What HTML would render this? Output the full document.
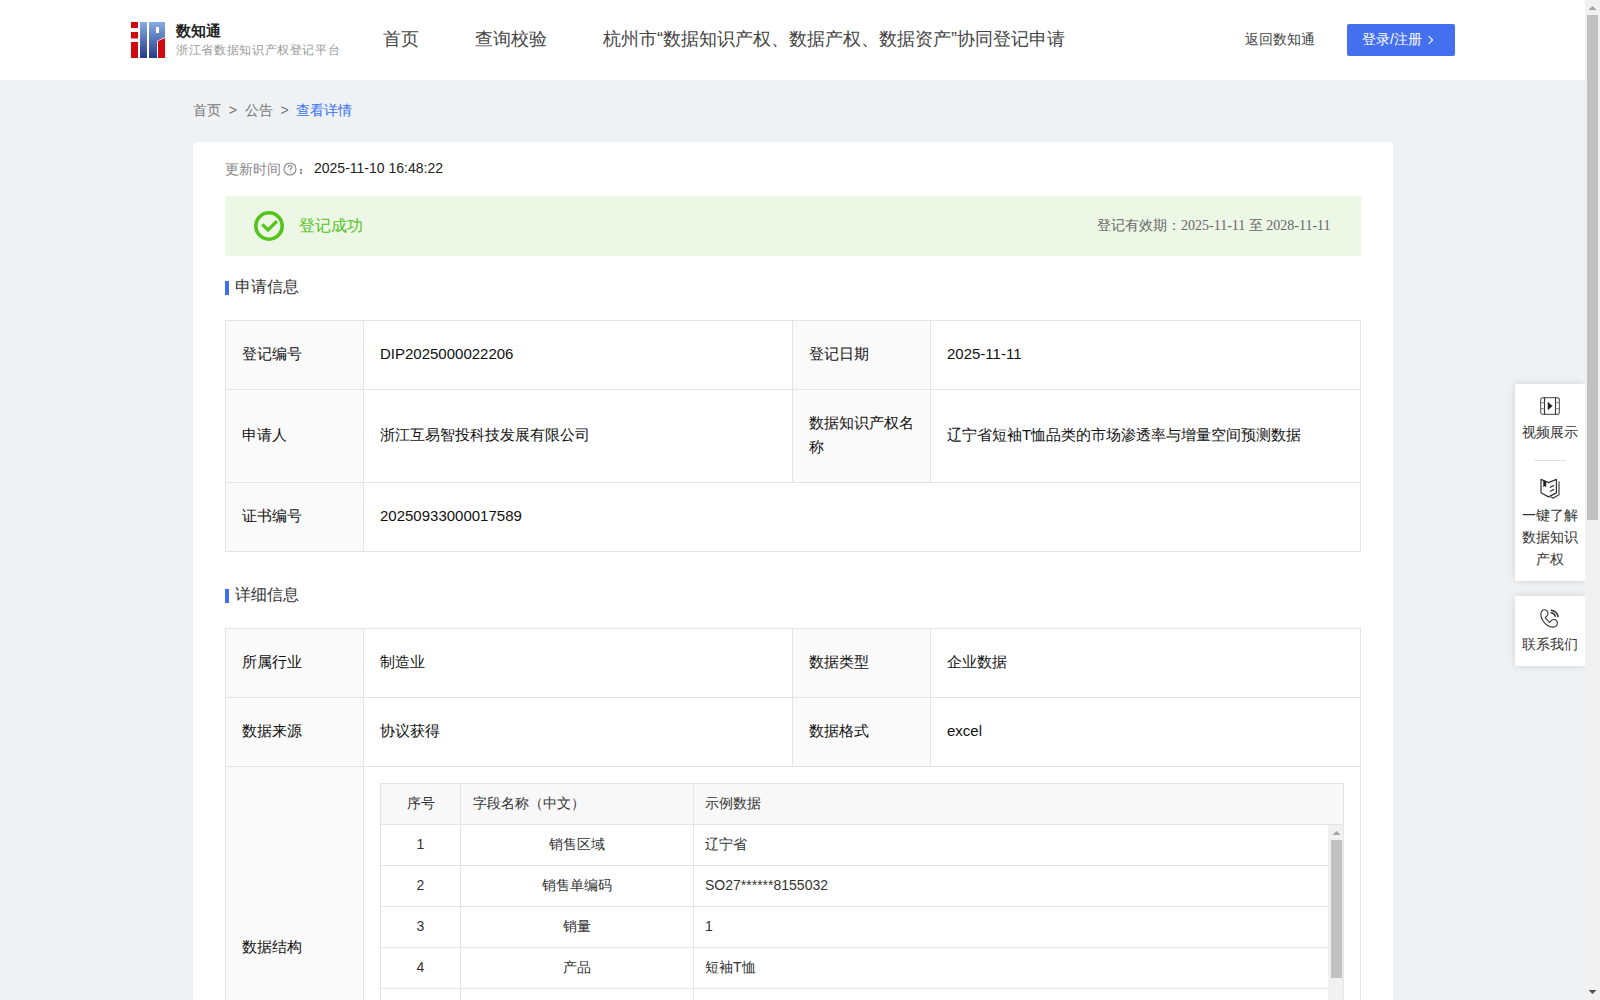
<!DOCTYPE html>
<html><head><meta charset="utf-8">
<style>
*{box-sizing:border-box;margin:0;padding:0}
html,body{width:1600px;height:1000px;overflow:hidden}
body{font-family:"Liberation Sans",sans-serif;background:#eef2f5;color:#333;position:relative;font-size:14px}
.abs{position:absolute;white-space:nowrap}
#hdr{position:absolute;left:0;top:0;width:1585px;height:80px;background:#fff}
.nav{position:absolute;top:27px;font-size:18px;color:#444;line-height:24px}
#sb{position:absolute;left:1585px;top:0;width:15px;height:1000px;background:#f1f1f1}
#sbthumb{position:absolute;left:2px;top:15px;width:11px;height:505px;background:#c1c1c1}
.card{position:absolute;left:193px;top:142px;width:1200px;height:900px;background:#fff;border-radius:4px}
.sect{position:absolute;left:225px;font-size:16px;color:#333;line-height:20px}
.sect i{position:absolute;left:0;top:4px;width:4px;height:14px;background:#3e6ff0}
.sect span{position:absolute;left:10px;top:0;white-space:nowrap}
table.t{position:absolute;left:225px;width:1136px;border-collapse:collapse;table-layout:fixed;font-size:15px;color:#111}
table.t td{border:1px solid #e4e4e4;padding:0 16px 2px;line-height:24px;vertical-align:middle}
table.t td.l{background:#fafafa}
.nt{font-size:14px;line-height:20px;color:#333;margin-top:-1px}
.pt{left:1515px;width:70px;text-align:center;font-size:14px;line-height:20px;color:#333}
</style></head><body>
<div id="hdr">
  <svg class="abs" style="left:131px;top:22px" width="34" height="36" viewBox="0 0 34 36">
    <defs><linearGradient id="bg" x1="0" y1="0" x2="0" y2="1"><stop offset="0" stop-color="#86ade3"/><stop offset="1" stop-color="#27398a"/></linearGradient></defs>
    <rect x="0" y="0" width="7" height="6" fill="#d10a10"/>
    <rect x="0" y="10" width="7" height="6.5" fill="#d10a10"/>
    <rect x="0" y="20" width="7" height="16" fill="#d10a10"/>
    <rect x="9" y="0" width="7" height="36" fill="url(#bg)"/>
    <path d="M18 0H34V15L26 19V36H18Z M25 5V11H28V5Z" fill="url(#bg)" fill-rule="evenodd"/>
    <path d="M27 19L34 16V36H27Z" fill="#d10a10"/>
  </svg>
  <div class="abs" style="left:176px;top:22px;font-size:14.5px;font-weight:bold;color:#222;line-height:18px">数知通</div>
  <div class="abs" style="left:176px;top:41px;font-size:12px;letter-spacing:0.65px;color:#999;line-height:18px">浙江省数据知识产权登记平台</div>
  <div class="nav abs" style="left:383px">首页</div>
  <div class="nav abs" style="left:475px">查询校验</div>
  <div class="nav abs" style="left:603px">杭州市“数据知识产权、数据产权、数据资产”协同登记申请</div>
  <div class="abs" style="left:1245px;top:29px;font-size:14px;color:#444;line-height:20px">返回数知通</div>
  <div class="abs" style="left:1347px;top:24px;width:108px;height:32px;background:#4470f0;border-radius:2px;color:#fff;font-size:14px;line-height:30px;padding-left:15px">登录/注册 <span style="display:inline-block;width:6px;height:6px;border-right:1.5px solid #fff;border-top:1.5px solid #fff;transform:rotate(45deg);margin-left:0px;position:relative;top:-1px"></span></div>
</div>

<div class="abs" style="left:193px;top:100px;font-size:14px;line-height:20px;color:#777">首页 &nbsp;&gt;&nbsp; 公告 &nbsp;&gt;&nbsp; <span style="color:#3370f0">查看详情</span></div>

<div class="card"></div>

<div class="abs" style="left:225px;top:159px;font-size:14px;line-height:20px;color:#888">更新时间</div>
<div class="abs" style="left:314px;top:158px;font-size:14px;line-height:20px;color:#222">2025-11-10 16:48:22</div>

<div class="abs" style="left:225px;top:196px;width:1136px;height:60px;background:#edf7e6"></div>
<div class="abs" style="left:299px;top:215px;font-size:16px;line-height:22px;color:#52c41a">登记成功</div>
<div class="abs" style="left:1097px;top:216px;font-size:14px;line-height:20px;color:#666;font-family:'Liberation Serif',serif">登记有效期：2025-11-11 至 2028-11-11</div>

<div class="sect" style="top:277px"><i></i><span>申请信息</span></div>

<table class="t" style="top:320px">
<colgroup><col style="width:138px"><col style="width:429px"><col style="width:138px"><col></colgroup>
<tr style="height:69px"><td class="l">登记编号</td><td>DIP2025000022206</td><td class="l">登记日期</td><td>2025-11-11</td></tr>
<tr style="height:93px"><td class="l">申请人</td><td>浙江互易智投科技发展有限公司</td><td class="l">数据知识产权名称</td><td>辽宁省短袖T恤品类的市场渗透率与增量空间预测数据</td></tr>
<tr style="height:69px"><td class="l">证书编号</td><td colspan="3">20250933000017589</td></tr>
</table>

<div class="sect" style="top:585px"><i></i><span>详细信息</span></div>

<table class="t" style="top:628px">
<colgroup><col style="width:138px"><col style="width:429px"><col style="width:138px"><col></colgroup>
<tr style="height:69px"><td class="l">所属行业</td><td>制造业</td><td class="l">数据类型</td><td>企业数据</td></tr>
<tr style="height:69px"><td class="l">数据来源</td><td>协议获得</td><td class="l">数据格式</td><td>excel</td></tr>
<tr style="height:362px"><td class="l">数据结构</td><td colspan="3"></td></tr>
</table>


<!-- question icon + colon -->
<svg class="abs" style="left:283px;top:162px" width="14" height="14" viewBox="0 0 14 14"><circle cx="7" cy="7" r="6" fill="none" stroke="#888" stroke-width="1.1"/><path d="M5 5.4C5 4.2 5.9 3.6 7 3.6S9 4.3 9 5.3C9 6.4 7.3 6.6 7.3 7.9V8.6" fill="none" stroke="#888" stroke-width="1.1"/><rect x="6.7" y="9.6" width="1.2" height="1.2" fill="#aaa"/></svg>
<div class="abs" style="left:300px;top:169px;width:2px;height:2px;background:#888"></div><div class="abs" style="left:300px;top:172px;width:2px;height:2px;background:#888"></div>
<!-- check icon -->
<svg class="abs" style="left:252px;top:209px" width="34" height="34" viewBox="0 0 34 34"><circle cx="17" cy="17" r="13.2" fill="none" stroke="#52c41a" stroke-width="3.6"/><path d="M10.3 15.4L16 21L24.9 12.2" fill="none" stroke="#52c41a" stroke-width="3.2"/></svg>

<!-- nested table -->
<div class="abs" style="left:380px;top:783px;width:964px;height:330px;background:#fff;border:1px solid #e4e4e4;overflow:hidden">
  <div class="abs" style="left:0;top:0;width:962px;height:41px;background:#f8f8f8;border-bottom:1px solid #e4e4e4"></div>
  <div class="abs" style="left:79px;top:0;width:1px;height:330px;background:#e4e4e4"></div>
  <div class="abs" style="left:312px;top:0;width:1px;height:330px;background:#e4e4e4"></div>
  <div class="abs nt" style="left:0;top:10px;width:79px;text-align:center">序号</div>
  <div class="abs nt" style="left:92px;top:10px">字段名称（中文）</div>
  <div class="abs nt" style="left:324px;top:10px">示例数据</div>
  <div class="abs" style="left:0;top:81px;width:947px;height:1px;background:#e4e4e4"></div>
<div class="abs nt" style="left:0;top:51px;width:79px;text-align:center">1</div>
<div class="abs nt" style="left:80px;top:51px;width:232px;text-align:center">销售区域</div>
<div class="abs nt" style="left:324px;top:51px">辽宁省</div>
<div class="abs" style="left:0;top:122px;width:947px;height:1px;background:#e4e4e4"></div>
<div class="abs nt" style="left:0;top:92px;width:79px;text-align:center">2</div>
<div class="abs nt" style="left:80px;top:92px;width:232px;text-align:center">销售单编码</div>
<div class="abs nt" style="left:324px;top:92px">SO27******8155032</div>
<div class="abs" style="left:0;top:163px;width:947px;height:1px;background:#e4e4e4"></div>
<div class="abs nt" style="left:0;top:133px;width:79px;text-align:center">3</div>
<div class="abs nt" style="left:80px;top:133px;width:232px;text-align:center">销量</div>
<div class="abs nt" style="left:324px;top:133px">1</div>
<div class="abs" style="left:0;top:204px;width:947px;height:1px;background:#e4e4e4"></div>
<div class="abs nt" style="left:0;top:174px;width:79px;text-align:center">4</div>
<div class="abs nt" style="left:80px;top:174px;width:232px;text-align:center">产品</div>
<div class="abs nt" style="left:324px;top:174px">短袖T恤</div>
<div class="abs" style="left:0;top:245px;width:947px;height:1px;background:#e4e4e4"></div>
<div class="abs nt" style="left:0;top:215px;width:79px;text-align:center">5</div>
<div class="abs nt" style="left:80px;top:215px;width:232px;text-align:center"></div>
<div class="abs nt" style="left:324px;top:215px"></div>
<div class="abs" style="left:0;top:286px;width:947px;height:1px;background:#e4e4e4"></div>
<div class="abs nt" style="left:0;top:256px;width:79px;text-align:center">6</div>
<div class="abs nt" style="left:80px;top:256px;width:232px;text-align:center"></div>
<div class="abs nt" style="left:324px;top:256px"></div>
<div class="abs" style="left:0;top:327px;width:947px;height:1px;background:#e4e4e4"></div>
<div class="abs nt" style="left:0;top:297px;width:79px;text-align:center">7</div>
<div class="abs nt" style="left:80px;top:297px;width:232px;text-align:center"></div>
<div class="abs nt" style="left:324px;top:297px"></div>

  <div class="abs" style="left:947px;top:41px;width:16px;height:300px;background:#f1f1f1"></div>
  <div class="abs" style="left:950px;top:56px;width:11px;height:138px;background:#c1c1c1"></div>
  <svg class="abs" style="left:951px;top:46px" width="9" height="6" viewBox="0 0 9 6"><path d="M0.5 5H8.5L4.5 1Z" fill="#a3a3a3"/></svg>
</div>

<!-- right float panels -->
<div class="abs" style="left:1515px;top:384px;width:70px;height:197px;background:#fff;box-shadow:0 0 8px rgba(0,0,0,0.13)"></div>
<div class="abs" style="left:1515px;top:596px;width:70px;height:70px;background:#fff;box-shadow:0 0 8px rgba(0,0,0,0.13)"></div>
<svg class="abs" style="left:1540px;top:397px" width="20" height="18" viewBox="0 0 20 18">
  <rect x="0.6" y="0.6" width="18.8" height="16.8" rx="2.5" fill="none" stroke="#666" stroke-width="1.2"/>
  <path d="M4.5 0.5V17.5M15.5 0.5V17.5" stroke="#333" stroke-width="1.1"/>
  <path d="M1 5.8H4.5M1 11.8H4.5M15.5 5.8H19M15.5 11.8H19" stroke="#777" stroke-width="1.1"/>
  <path d="M8 5.3L12.3 9L8 12.7Z" fill="#222" stroke="#222" stroke-width="0.5" stroke-linejoin="round"/>
</svg>
<div class="abs pt" style="top:422px">视频展示</div>
<div class="abs" style="left:1534px;top:460px;width:32px;height:1px;background:#e0e0e0"></div>
<svg class="abs" style="left:1539px;top:477px" width="22" height="24" viewBox="0 0 22 24">
  <path d="M2 2.4V15.8L9.5 19.9L17.4 15.9V2.4L9.5 5.6Z" fill="none" stroke="#333" stroke-width="1.2" stroke-linejoin="round"/>
  <path d="M20 4.6V17.8L14 21.1L11.6 19.8" fill="none" stroke="#444" stroke-width="1.2" stroke-linejoin="round"/>
  <path d="M4.3 3.2L7.2 4.2V10.2L5.75 8.9L4.3 10.2Z" fill="#222"/>
  <path d="M11.3 10.2L14.6 8.6M11.3 14.2L14.6 12.6" stroke="#333" stroke-width="1.2" stroke-linecap="round"/>
</svg>
<div class="abs pt" style="top:505px">一键了解</div>
<div class="abs pt" style="top:527px">数据知识</div>
<div class="abs pt" style="top:549px">产权</div>
<svg class="abs" style="left:1539px;top:608px" width="22" height="22" viewBox="0 0 22 22">
  <path d="M5.3 1.8C3.4 1.8 1.8 3.6 1.8 6.5C1.8 10.5 5 15.5 9 17.8C11 19 12.8 19.3 14.5 19.1C16.6 18.8 18.3 17.1 18.3 15C18.3 13 16.6 11.5 14.6 11.5C13 11.5 11.7 12.8 10.4 14.5L6.2 9.6C7.5 8.6 9 7.6 9 5.5C9 3.4 7.4 1.8 5.3 1.8Z" fill="none" stroke="#333" stroke-width="1.1" stroke-linejoin="round"/>
  <path d="M12.2 2.3C15.6 2.8 18.4 5.4 19.1 8.6M12.2 4.7C14.3 5.2 15.9 6.7 16.4 8.3" fill="none" stroke="#333" stroke-width="1.5" stroke-linecap="round"/>
</svg>
<div class="abs pt" style="top:634px">联系我们</div>

<!-- page scrollbar arrows -->
<div id="sb"><div id="sbthumb"></div><svg class="abs" style="left:3px;top:5px" width="9" height="6" viewBox="0 0 9 6"><path d="M0.5 5H8.5L4.5 1Z" fill="#a3a3a3"/></svg><svg class="abs" style="left:3px;top:989px" width="9" height="6" viewBox="0 0 9 6"><path d="M0.5 1H8.5L4.5 5Z" fill="#505050"/></svg></div>
</body></html>
